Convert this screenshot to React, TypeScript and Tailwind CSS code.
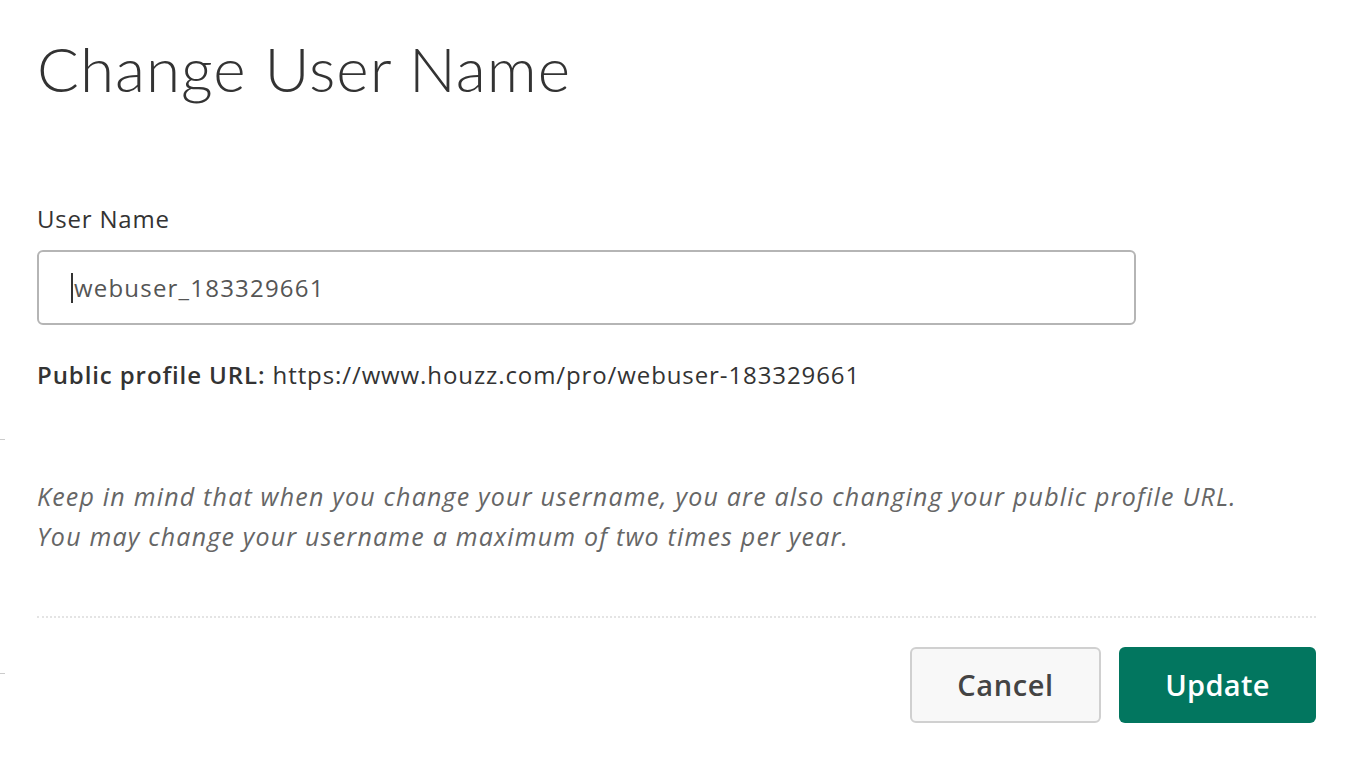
export default function App() {
  return (
    <div className="relative min-h-[762px] bg-white font-['Open_Sans',sans-serif] text-[#333]">
      <span className="absolute left-0 top-[439px] h-px w-[5px] bg-[#ccc]" />
      <span className="absolute left-0 top-[673px] h-px w-[5px] bg-[#ccc]" />
      <div className="pl-[37px] pr-[54px] pt-[31px]">
        <h1 className="font-['Lato',sans-serif] text-[62px] font-light leading-[74px] tracking-[1px]">
          Change User Name
        </h1>

        <label className="mt-[94px] block text-[24px] leading-[40px] tracking-[0.8px] text-[#333]">User Name</label>
        <div className="mt-[11px] flex h-[75px] w-[1099px] items-center rounded-[6px] border-2 border-[#b5b5b5] pl-[32px]">
          <span className="mr-[1px] h-[30px] w-[2px] bg-[#333]" />
          <span className="text-[24px] tracking-[1.2px] text-[#555]">webuser_183329661</span>
        </div>

        <p className="mt-[33px] text-[24px] leading-[34px] tracking-[0.9px] text-[#333]">
          <span className="font-semibold">Public profile URL:</span> https://www.houzz.com/pro/webuser-183329661
        </p>

        <div className="mt-[84px] text-[25px] italic leading-[40px] tracking-[1.2px] text-[#666]">
          <p>Keep in mind that when you change your username, you are also changing your public profile URL.</p>
          <p>You may change your username a maximum of two times per year.</p>
        </div>

        <div className="mt-[60px] border-t-2 border-dotted border-[#e4e4e4]" />

        <div className="mt-[29px] flex justify-end gap-[18px]">
          <button className="h-[76px] w-[191px] rounded-[6px] border-2 border-[#d0d0d0] bg-[#f8f8f8] text-[29px] font-semibold tracking-[0.6px] text-[#444]">
            Cancel
          </button>
          <button className="h-[76px] w-[197px] rounded-[6px] bg-[#02765f] text-[29px] font-semibold tracking-[0.3px] text-white">
            Update
          </button>
        </div>
      </div>
    </div>
  );
}
